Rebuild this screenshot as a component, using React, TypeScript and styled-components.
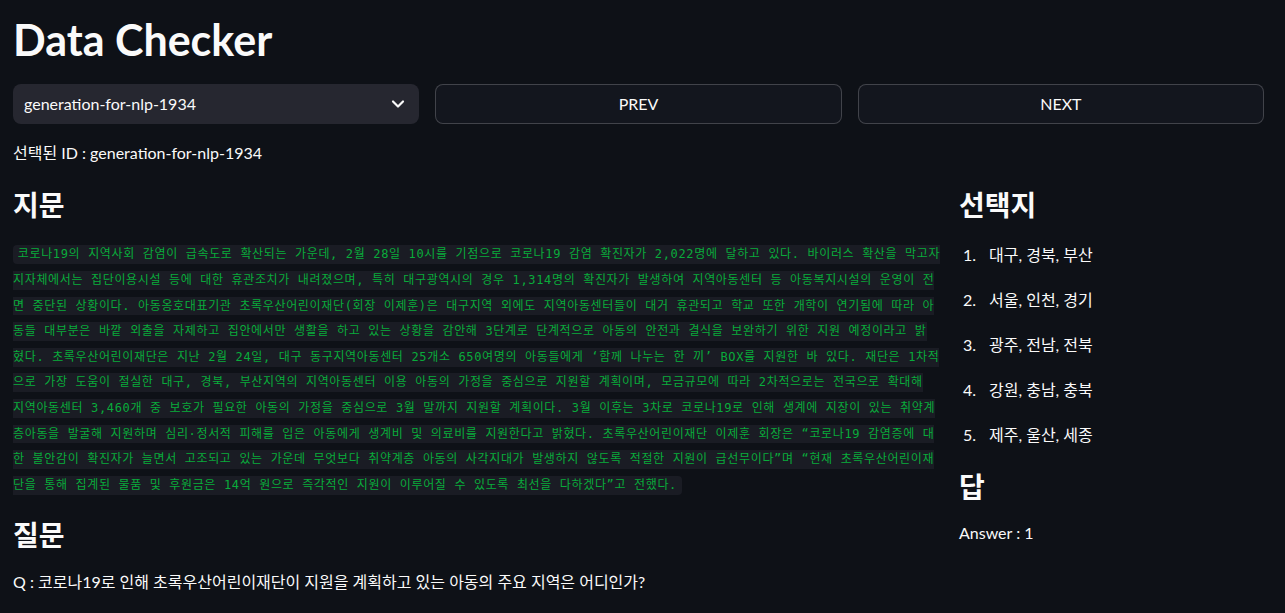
import React from "react";
import styled, { createGlobalStyle } from "styled-components";

const GlobalStyle = createGlobalStyle`
  html, body {
    margin: 0;
    padding: 0;
    background: #0e1117;
  }
  body {
    font-family: Lato, "Noto Sans CJK KR", sans-serif;
    color: #fafafa;
  }
`;

const Page = styled("div")({
  minHeight: "100vh",
  boxSizing: "border-box",
  padding: "14px 21px 0 13px",
  display: "flex",
  flexDirection: "column",
});

const Title = styled("h1")({
  margin: 0,
  fontSize: "43px",
  fontWeight: 700,
  lineHeight: 1.2,
});

const ControlRow = styled("div")({
  marginTop: "18px",
  display: "grid",
  gridTemplateColumns: "repeat(3, minmax(0, 1fr))",
  gap: "16px",
});

const Select = styled("div")({
  height: "40px",
  boxSizing: "border-box",
  backgroundColor: "#262730",
  borderRadius: "8px",
  display: "flex",
  alignItems: "center",
  justifyContent: "space-between",
  padding: "0 11px 0 11px",
  fontSize: "16px",
});

const NavButton = styled("button")({
  height: "40px",
  boxSizing: "border-box",
  backgroundColor: "#13161e",
  border: "1px solid rgba(250, 250, 250, 0.2)",
  borderRadius: "8px",
  color: "#fafafa",
  fontFamily: "inherit",
  fontSize: "16px",
  fontWeight: 400,
  cursor: "pointer",
});

const Text = styled("p")<{ gap?: number }>(({ gap }) => ({
  margin: `${gap ?? 0}px 0 0`,
  fontSize: "16px",
  lineHeight: "25.6px",
}));

const Columns = styled("div")({
  marginTop: "24px",
  display: "grid",
  gridTemplateColumns: "minmax(0, 930fr) minmax(0, 305fr)",
  gap: "16px",
});

const Column = styled("div")({
  display: "flex",
  flexDirection: "column",
});

const Heading = styled("h3")<{ gap?: number }>(({ gap }) => ({
  margin: `${gap ?? 0}px 0 0`,
  fontSize: "28px",
  fontWeight: 700,
  lineHeight: 1.2,
}));

const Passage = styled("p")({
  margin: "17px 0 0",
  fontSize: "16px",
  lineHeight: "25.6px",
  whiteSpace: "nowrap",
});

const Code = styled("code")({
  fontFamily: '"DejaVu Sans Mono", "Noto Sans CJK KR", monospace',
  fontSize: "12px",
  letterSpacing: "0.65px",
  lineHeight: 1,
  color: "#09ab3b",
  backgroundColor: "#1a1c24",
  padding: "0.2em 0.4em",
  borderRadius: "4px",
});

const Choices = styled("ol")({
  listStyle: "none",
  margin: "19px 0 0",
  padding: 0,
  display: "flex",
  flexDirection: "column",
  gap: "19.4px",
});

const Choice = styled("li")({
  display: "flex",
  fontSize: "16px",
  lineHeight: "25.6px",
});

const Marker = styled("span")({
  width: "30px",
  paddingLeft: "4px",
  boxSizing: "border-box",
  flexShrink: 0,
});

const Chevron = () => (
  <svg width="20" height="20" viewBox="0 0 24 24" fill="none">
    <polyline
      points="6 9 12 15 18 9"
      stroke="#fafafa"
      strokeWidth="2.6"
      strokeLinecap="round"
      strokeLinejoin="round"
    />
  </svg>
);

const passageLines = [
  "코로나19의 지역사회 감염이 급속도로 확산되는 가운데, 2월 28일 10시를 기점으로 코로나19 감염 확진자가 2,022명에 달하고 있다. 바이러스 확산을 막고자",
  "지자체에서는 집단이용시설 등에 대한 휴관조치가 내려졌으며, 특히 대구광역시의 경우 1,314명의 확진자가 발생하여 지역아동센터 등 아동복지시설의 운영이 전",
  "면 중단된 상황이다. 아동옹호대표기관 초록우산어린이재단(회장 이제훈)은 대구지역 외에도 지역아동센터들이 대거 휴관되고 학교 또한 개학이 연기됨에 따라 아",
  "동들 대부분은 바깥 외출을 자제하고 집안에서만 생활을 하고 있는 상황을 감안해 3단계로 단계적으로 아동의 안전과 결식을 보완하기 위한 지원 예정이라고 밝",
  "혔다. 초록우산어린이재단은 지난 2월 24일, 대구 동구지역아동센터 25개소 650여명의 아동들에게 ‘함께 나누는 한 끼’ BOX를 지원한 바 있다. 재단은 1차적",
  "으로 가장 도움이 절실한 대구, 경북, 부산지역의 지역아동센터 이용 아동의 가정을 중심으로 지원할 계획이며, 모금규모에 따라 2차적으로는 전국으로 확대해",
  "지역아동센터 3,460개 중 보호가 필요한 아동의 가정을 중심으로 3월 말까지 지원할 계획이다. 3월 이후는 3차로 코로나19로 인해 생계에 지장이 있는 취약계",
  "층아동을 발굴해 지원하며 심리·정서적 피해를 입은 아동에게 생계비 및 의료비를 지원한다고 밝혔다. 초록우산어린이재단 이제훈 회장은 “코로나19 감염증에 대",
  "한 불안감이 확진자가 늘면서 고조되고 있는 가운데 무엇보다 취약계층 아동의 사각지대가 발생하지 않도록 적절한 지원이 급선무이다”며 “현재 초록우산어린이재",
  "단을 통해 집계된 물품 및 후원금은 14억 원으로 즉각적인 지원이 이루어질 수 있도록 최선을 다하겠다”고 전했다.",
];

const choices = [
  "대구, 경북, 부산",
  "서울, 인천, 경기",
  "광주, 전남, 전북",
  "강원, 충남, 충북",
  "제주, 울산, 세종",
];

const App: React.FC = () => (
  <>
    <GlobalStyle />
    <Page>
      <Title>Data Checker</Title>
      <ControlRow>
        <Select>
          <span>generation-for-nlp-1934</span>
          <Chevron />
        </Select>
        <NavButton>PREV</NavButton>
        <NavButton>NEXT</NavButton>
      </ControlRow>
      <Text gap={16}>선택된 ID : generation-for-nlp-1934</Text>
      <Columns>
        <Column>
          <Heading>지문</Heading>
          <Passage>
            <Code>
              {passageLines.map((line, i) => (
                <React.Fragment key={i}>
                  {line}
                  {i < passageLines.length - 1 && <br />}
                </React.Fragment>
              ))}
            </Code>
          </Passage>
          <Heading gap={23}>질문</Heading>
          <Text gap={17}>
            Q : 코로나19로 인해 초록우산어린이재단이 지원을 계획하고 있는 아동의 주요 지역은 어디인가?
          </Text>
        </Column>
        <Column>
          <Heading>선택지</Heading>
          <Choices>
            {choices.map((choice, i) => (
              <Choice key={i}>
                <Marker>{i + 1}.</Marker>
                <span>{choice}</span>
              </Choice>
            ))}
          </Choices>
          <Heading gap={24}>답</Heading>
          <Text gap={15}>Answer : 1</Text>
        </Column>
      </Columns>
    </Page>
  </>
);

export default App;
